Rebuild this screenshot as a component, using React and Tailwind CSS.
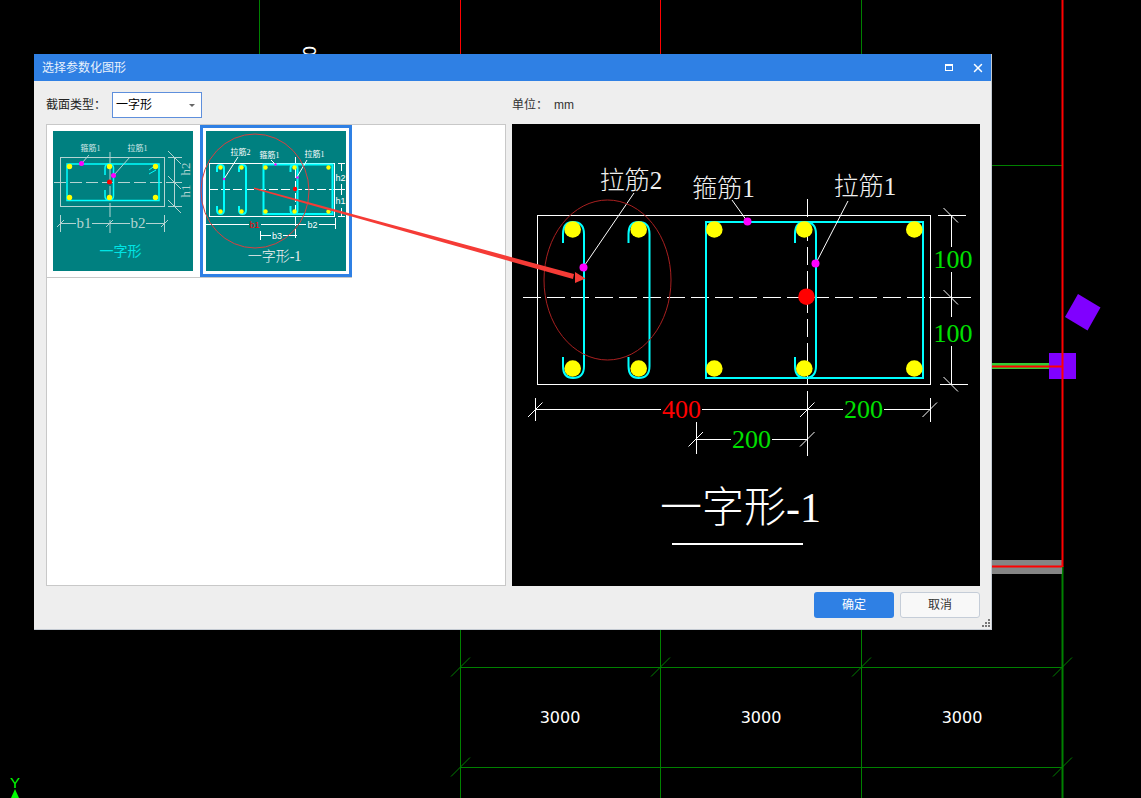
import { X } from 'lucide-react';

const SERIF = "'Liberation Serif','Noto Sans CJK SC',serif";
const SANS = "'Liberation Sans','Noto Sans CJK SC',sans-serif";

// 背景 CAD 画布
const GREEN = '#008000';
const RED = '#ff0000';

function Lines({ items, stroke, width = 1 }) {
  return items.map((l, i) => (
    <line key={i} x1={l[0]} y1={l[1]} x2={l[2]} y2={l[3]} stroke={stroke} strokeWidth={width} />
  ));
}

function Dots({ items, r, fill }) {
  return items.map((p, i) => <circle key={i} cx={p[0]} cy={p[1]} r={r} fill={fill} />);
}

function Label({ x, y, size, fill, children, family = SERIF, anchor = 'middle', rotate, weight = 400 }) {
  return (
    <text
      x={x}
      y={y}
      fontSize={size}
      fontWeight={weight}
      fill={fill}
      fontFamily={family}
      textAnchor={anchor}
      dominantBaseline="central"
      transform={rotate ? `rotate(${rotate} ${x} ${y})` : undefined}
    >
      {children}
    </text>
  );
}

function CadBackground() {
  const gridX = [460.5, 660.5, 861.5, 1062.5];
  return (
    <svg className="absolute inset-0" width="1141" height="798" viewBox="0 0 1141 798">
      <Lines
        stroke={GREEN}
        items={[
          [259.5, 0, 259.5, 54],
          [861.5, 0, 861.5, 54],
          [992, 165.5, 1062, 165.5],
          [460.5, 630, 460.5, 798],
          [660.5, 630, 660.5, 798],
          [861.5, 630, 861.5, 798],
          [460, 667.5, 1062, 667.5],
          [460, 767.5, 1062, 767.5],
        ]}
      />
      <Lines stroke={GREEN} width={2} items={[[1062.5, 566, 1062.5, 798]]} />
      <Lines stroke={RED} items={[[460.5, 0, 460.5, 54], [660.5, 0, 660.5, 54]]} />
      {gridX.map((x) => (
        <line key={x} x1={x - 9.5} y1={676.5} x2={x + 9.5} y2={657.5} stroke={GREEN} />
      ))}
      <Lines stroke={GREEN} items={[[451, 776.5, 470, 757.5], [1053, 776.5, 1072, 757.5]]} />

      <rect x="992" y="363" width="57" height="6" fill="#33cc33" />
      <rect x="992" y="560" width="70" height="14" fill="#858585" />
      <rect x="1049" y="353" width="27" height="26" fill="#8000ff" />
      <polygon points="1078,294 1100.5,307.5 1087.5,330.5 1065,317" fill="#8000ff" />
      <Lines
        stroke={RED}
        width={2}
        items={[
          [1062.5, 0, 1062.5, 567],
          [992, 366.5, 1062, 366.5],
          [992, 566.5, 1062, 566.5],
        ]}
      />

      {[560, 761, 962].map((x) => (
        <Label key={x} x={x} y={717} size={16} fill="#fff" family="'DejaVu Sans',sans-serif">
          3000
        </Label>
      ))}
      <Label x={310} y={51} size={17} fill="#fff" family="'DejaVu Sans',sans-serif" rotate={-90}>
        0
      </Label>

      <Label x={15} y={782} size={15} fill="#00ff00" family={SANS}>
        Y
      </Label>
      <polygon points="15,789 19,798 11,798" fill="#00ff00" />
    </svg>
  );
}

function tiePath(x, top, bottom, hook) {
  const left = x - 21;
  const mid = x - 11;
  return `M${left} ${top + hook} V${top + 12} Q${left} ${top} ${mid} ${top} Q${x} ${top} ${x} ${top + 12} V${bottom - 12} Q${x} ${bottom} ${mid} ${bottom} Q${left} ${bottom} ${left} ${bottom - 12} V${bottom - hook}`;
}

// 右侧大预览
function MainPreview() {
  return (
    <svg className="block" width="468" height="462" viewBox="512 124 468 462">
      <rect x="537.5" y="215.5" width="393" height="169" fill="none" stroke="#fff" />
      <line x1="523" y1="297.5" x2="971" y2="297.5" stroke="#fff" strokeDasharray="18 6" />
      <line x1="807.5" y1="199" x2="807.5" y2="391" stroke="#fff" strokeDasharray="18 6" />

      <rect x="706" y="222" width="217" height="156" fill="none" stroke="#00ffff" strokeWidth="2" />
      {[584, 649.5, 816].map((x) => (
        <path key={x} d={tiePath(x, 222, 378, 21)} fill="none" stroke="#00ffff" strokeWidth="2" />
      ))}
      <Dots
        r={8.3}
        fill="#ffff00"
        items={[
          [572.7, 229.5], [638.7, 229.5], [714.3, 229.5], [804.3, 229.5], [914.3, 229.5],
          [572.7, 368.5], [638.7, 368.5], [714.3, 368.5], [804.3, 368.5], [914.3, 368.5],
        ]}
      />
      <circle cx="806.5" cy="296.7" r="8.3" fill="#ff0000" />
      <Lines
        stroke="#fff"
        items={[
          [583.5, 267, 634, 193],
          [747, 221, 732, 200],
          [816, 263, 848, 201],
        ]}
      />
      <Dots r={4} fill="#ff00ff" items={[[583.5, 267.5], [747.5, 221.5], [815.5, 263.5]]} />
      <Label x={631} y={180} size={25} fill="#f0f0f0" weight={200}>拉筋2</Label>
      <Label x={723.5} y={188} size={25} fill="#f0f0f0" weight={200}>箍筋1</Label>
      <Label x={865} y={186} size={25} fill="#f0f0f0" weight={200}>拉筋1</Label>

      {/* 尺寸线 */}
      <Lines
        stroke="#fff"
        items={[
          [938, 215.5, 966, 215.5], [929, 297.5, 971, 297.5], [940, 384.5, 968, 384.5],
          [951.5, 215, 951.5, 247], [951.5, 272, 951.5, 317], [951.5, 346, 951.5, 384],
          [943.5, 208, 958, 222.5], [943.5, 290, 958, 304.5], [943.5, 377, 958, 391.5],
          [535, 409.5, 661, 409.5], [702, 409.5, 843, 409.5], [884, 409.5, 931, 409.5],
          [535.5, 398, 535.5, 421], [807.5, 391, 807.5, 456], [930.5, 398, 930.5, 422],
          [528, 417, 542.5, 402.5], [800, 417, 814.5, 402.5], [922.5, 417, 937, 402.5],
          [696.5, 439.5, 731, 439.5], [772, 439.5, 807, 439.5],
          [696.5, 422, 696.5, 454],
          [688.5, 446.5, 703, 432], [800, 446.5, 814.5, 432],
        ]}
      />
      <Label x={953} y={259} size={26} fill="#00e000">100</Label>
      <Label x={953} y={333} size={26} fill="#00e000">100</Label>
      <Label x={681.5} y={409} size={26} fill="#ff0000">400</Label>
      <Label x={863.5} y={409} size={26} fill="#00e000">200</Label>
      <Label x={751.5} y={439} size={26} fill="#00e000">200</Label>

      <Label x={740.5} y={508} size={42} fill="#fff" weight={200}>一字形-1</Label>
      <rect x="672" y="543" width="131" height="2" fill="#fff" />
    </svg>
  );
}

// 缩略图 一字形
function ThumbBasic() {
  const c = '#b4d4d2';
  return (
    <svg className="block" width="140" height="140" viewBox="53 131 140 140">
      <rect x="53" y="131" width="140" height="140" fill="#008080" />
      <rect x="60.5" y="157.5" width="104" height="49" fill="none" stroke={c} />
      <line x1="54" y1="182.5" x2="178" y2="182.5" stroke={c} strokeDasharray="12 4" />
      <line x1="110" y1="152" x2="110" y2="233" stroke={c} strokeDasharray="14 3" />
      <rect x="67" y="164" width="92" height="36.5" fill="none" stroke="#00ffff" strokeWidth="1.5" />
      <path d="M105 175 V168 Q105 164 109 164 Q113.5 164 113.5 168 V196 Q113.5 200 109 200 Q105 200 105 196 V190" fill="none" stroke="#00ffff" strokeWidth="1.5" />
      <Lines stroke="#00ffff" items={[[149, 170, 156, 165], [149, 174, 156, 170]]} />
      <Dots
        r={2.7}
        fill="#ffff00"
        items={[[69.5, 166.5], [109.5, 166.5], [155.5, 166.5], [69.5, 197.5], [109.5, 197.5], [155.5, 197.5]]}
      />
      <Lines stroke={c} items={[[82, 163, 89, 155], [114, 175, 130, 157]]} />
      <Dots r={2.5} fill="#ff00ff" items={[[81.5, 163.5], [113.5, 175.5]]} />
      <circle cx="109.5" cy="182" r="2.5" fill="#ff0000" />
      <Label x={90.5} y={148} size={8} fill="#d4e8e8">箍筋1</Label>
      <Label x={137.5} y={148} size={8} fill="#d4e8e8">拉筋1</Label>

      <Lines
        stroke={c}
        items={[
          [168, 157.5, 182, 157.5], [168, 182.5, 182, 182.5], [168, 206.5, 182, 206.5],
          [174.5, 157, 174.5, 207],
          [168, 151, 181, 164], [168, 176, 181, 189], [168, 200, 181, 213],
          [60, 223.5, 76, 223.5], [92, 223.5, 130, 223.5], [146, 223.5, 165, 223.5],
          [60.5, 215, 60.5, 232], [164.5, 215, 164.5, 232],
          [57, 227, 64, 220], [106, 227, 113, 220], [161, 227, 168, 220],
        ]}
      />
      <Label x={185} y={169} size={13} fill={c} rotate={-90}>h2</Label>
      <Label x={185} y={191} size={13} fill={c} rotate={-90}>h1</Label>
      <Label x={84} y={223} size={15} fill={c}>b1</Label>
      <Label x={138} y={223} size={15} fill={c}>b2</Label>
      <Label x={120.5} y={251.5} size={14} fill="#00e4e4">一字形</Label>
    </svg>
  );
}

// 缩略图 一字形-1
function ThumbOne() {
  const ties = [224, 246, 297.5];
  return (
    <svg className="block" width="140" height="140" viewBox="206 131 140 140">
      <rect x="206" y="131" width="140" height="140" fill="#008080" />
      <rect x="209.5" y="163.5" width="125" height="53" fill="none" stroke="#fff" />
      <line x1="209" y1="189.5" x2="338" y2="189.5" stroke="#fff" strokeDasharray="9 3" />
      <line x1="295.5" y1="157" x2="295.5" y2="240" stroke="#fff" strokeDasharray="9 3" />
      <rect x="263.5" y="164.5" width="69" height="49.5" fill="none" stroke="#00ffff" strokeWidth="2" />
      {ties.map((x) => (
        <path
          key={x}
          d={`M${x - 7} 172 V168 Q${x - 7} 165 ${x - 3.5} 165 Q${x} 165 ${x} 168 V210 Q${x} 214 ${x - 3.5} 214 Q${x - 7} 214 ${x - 7} 210 V206`}
          fill="none"
          stroke="#00ffff"
          strokeWidth="2"
        />
      ))}
      <Dots
        r={2.2}
        fill="#ffff00"
        items={[
          [220.5, 167.5], [241.5, 167.5], [265.5, 167.5], [294.5, 167.5], [328.5, 167.5],
          [220.5, 211.5], [241.5, 211.5], [265.5, 211.5], [294.5, 211.5], [328.5, 211.5],
        ]}
      />
      <circle cx="295" cy="189" r="2.2" fill="#ff0000" />
      <Lines stroke="#fff" items={[[224, 179, 238, 157], [275, 164, 271, 160], [297, 177, 307, 160]]} />
      <Dots r={1.2} fill="#ff00ff" items={[[224, 179], [275.5, 164.5], [297.5, 177.5]]} />
      <Label x={240.5} y={152} size={8} fill="#fff">拉筋2</Label>
      <Label x={269.5} y={155} size={8} fill="#fff">箍筋1</Label>
      <Label x={314.5} y={154} size={8} fill="#fff">拉筋1</Label>

      <Lines
        stroke="#fff"
        items={[
          [206, 224.5, 249, 224.5], [261, 224.5, 306, 224.5], [319, 224.5, 336, 224.5],
          [260.5, 235.5, 271, 235.5], [283, 235.5, 297, 235.5],
          [260.5, 231, 260.5, 240], [335.5, 218, 335.5, 229],
          [338, 163.5, 345, 163.5], [338, 189.5, 345, 189.5], [338, 216.5, 345, 216.5],
          [341.5, 164, 341.5, 171], [341.5, 184, 341.5, 195], [341.5, 208, 341.5, 216],
        ]}
      />
      <Label x={254.5} y={225} size={9} fill="#ff0000" family={SANS}>b1</Label>
      <Label x={312.5} y={225} size={9} fill="#fff" family={SANS}>b2</Label>
      <Label x={277} y={235.5} size={9} fill="#fff" family={SANS}>b3</Label>
      <Label x={340.5} y={177.5} size={9} fill="#fff" family={SANS}>h2</Label>
      <Label x={340.5} y={201} size={9} fill="#fff" family={SANS}>h1</Label>
      <Label x={274.5} y={256} size={14} fill="#f0f0f0" weight={200}>一字形-1</Label>
    </svg>
  );
}

// 盖在对话框上的红圈和箭头
function Markup() {
  return (
    <svg className="absolute inset-0 pointer-events-none" width="1141" height="798" viewBox="0 0 1141 798">
      <ellipse cx="255" cy="191" rx="54" ry="57" fill="none" stroke="#d84040" strokeWidth="1" />
      <ellipse cx="607.5" cy="280" rx="63.5" ry="80" fill="none" stroke="#a82020" strokeWidth="1" />
      <polygon points="254,187.5 574,274 573,279 254,189" fill="#f53b36" />
      <polygon points="585.5,278.5 575,272 575,283" fill="#f53b36" />
    </svg>
  );
}

export default function App() {
  return (
    <div className="relative w-[1141px] h-[798px] overflow-hidden bg-black font-['Liberation_Sans','Noto_Sans_CJK_SC',sans-serif]">
      <CadBackground />

      <div className="absolute left-[34px] top-[54px] w-[958px] h-[576px] flex flex-col bg-[#eeeeee] border-r border-b border-[#c4cad2]">
        <div className="h-[27px] shrink-0 flex items-center justify-between bg-[#2f80e4] pl-2 pr-[6px]">
          <span className="text-xs text-[#e8f1fc]">选择参数化图形</span>
          <div className="flex items-center gap-[18px]">
            <div className="w-2 h-[7px] border border-white border-t-2"></div>
            <X size={14} strokeWidth={2.5} className="text-white" />
          </div>
        </div>

        <div className="flex-1 flex gap-[6px] pl-[12px]">
          <div className="w-[460px] flex flex-col">
            <div className="h-[43px] flex items-center gap-[6px] pt-[5px]">
              <span className="w-[60px] text-xs text-[#222]">截面类型：</span>
              <div className="relative w-[90px] h-[26px] flex items-center bg-white border border-[#5e8fdc] pl-[3px] text-xs text-black">
                一字形
                <span className="absolute right-[6px] top-[11px] border-x-[3px] border-t-[3px] border-x-transparent border-t-[#666]"></span>
              </div>
            </div>
            <div className="h-[462px] bg-white border border-[#c8c8c8]">
              <div className="flex w-[305px] border-b border-[#c8c8c8]">
                <div className="w-[153px] h-[152px] p-[6px]">
                  <ThumbBasic />
                </div>
                <div className="w-[152px] h-[152px] border-[3px] border-[#2f80e4] p-[3px]">
                  <ThumbOne />
                </div>
              </div>
            </div>
          </div>

          <div className="w-[468px] flex flex-col">
            <div className="h-[43px] flex items-center text-xs text-[#333] pt-[5px]">
              <span className="w-[42px]">单位：</span>
              <span>mm</span>
            </div>
            <div className="h-[462px] bg-black">
              <MainPreview />
            </div>
            <div className="flex justify-end gap-[6px] pt-[6px]">
              <button className="w-[80px] h-[26px] rounded-[3px] bg-[#2f80e4] text-xs text-white">确定</button>
              <button className="w-[80px] h-[26px] rounded-[3px] bg-[#f8f8f8] border border-[#c5cdd8] text-xs text-[#333]">取消</button>
            </div>
          </div>
        </div>

        <svg className="absolute right-[1px] bottom-[1px]" width="8" height="9" viewBox="0 0 8 9">
          {[[6, 0], [3, 3], [6, 3], [0, 6], [3, 6], [6, 6]].map((p, i) => (
            <rect key={i} x={p[0]} y={p[1]} width="2" height="2" fill="#777" />
          ))}
        </svg>
      </div>

      <Markup />
    </div>
  );
}
